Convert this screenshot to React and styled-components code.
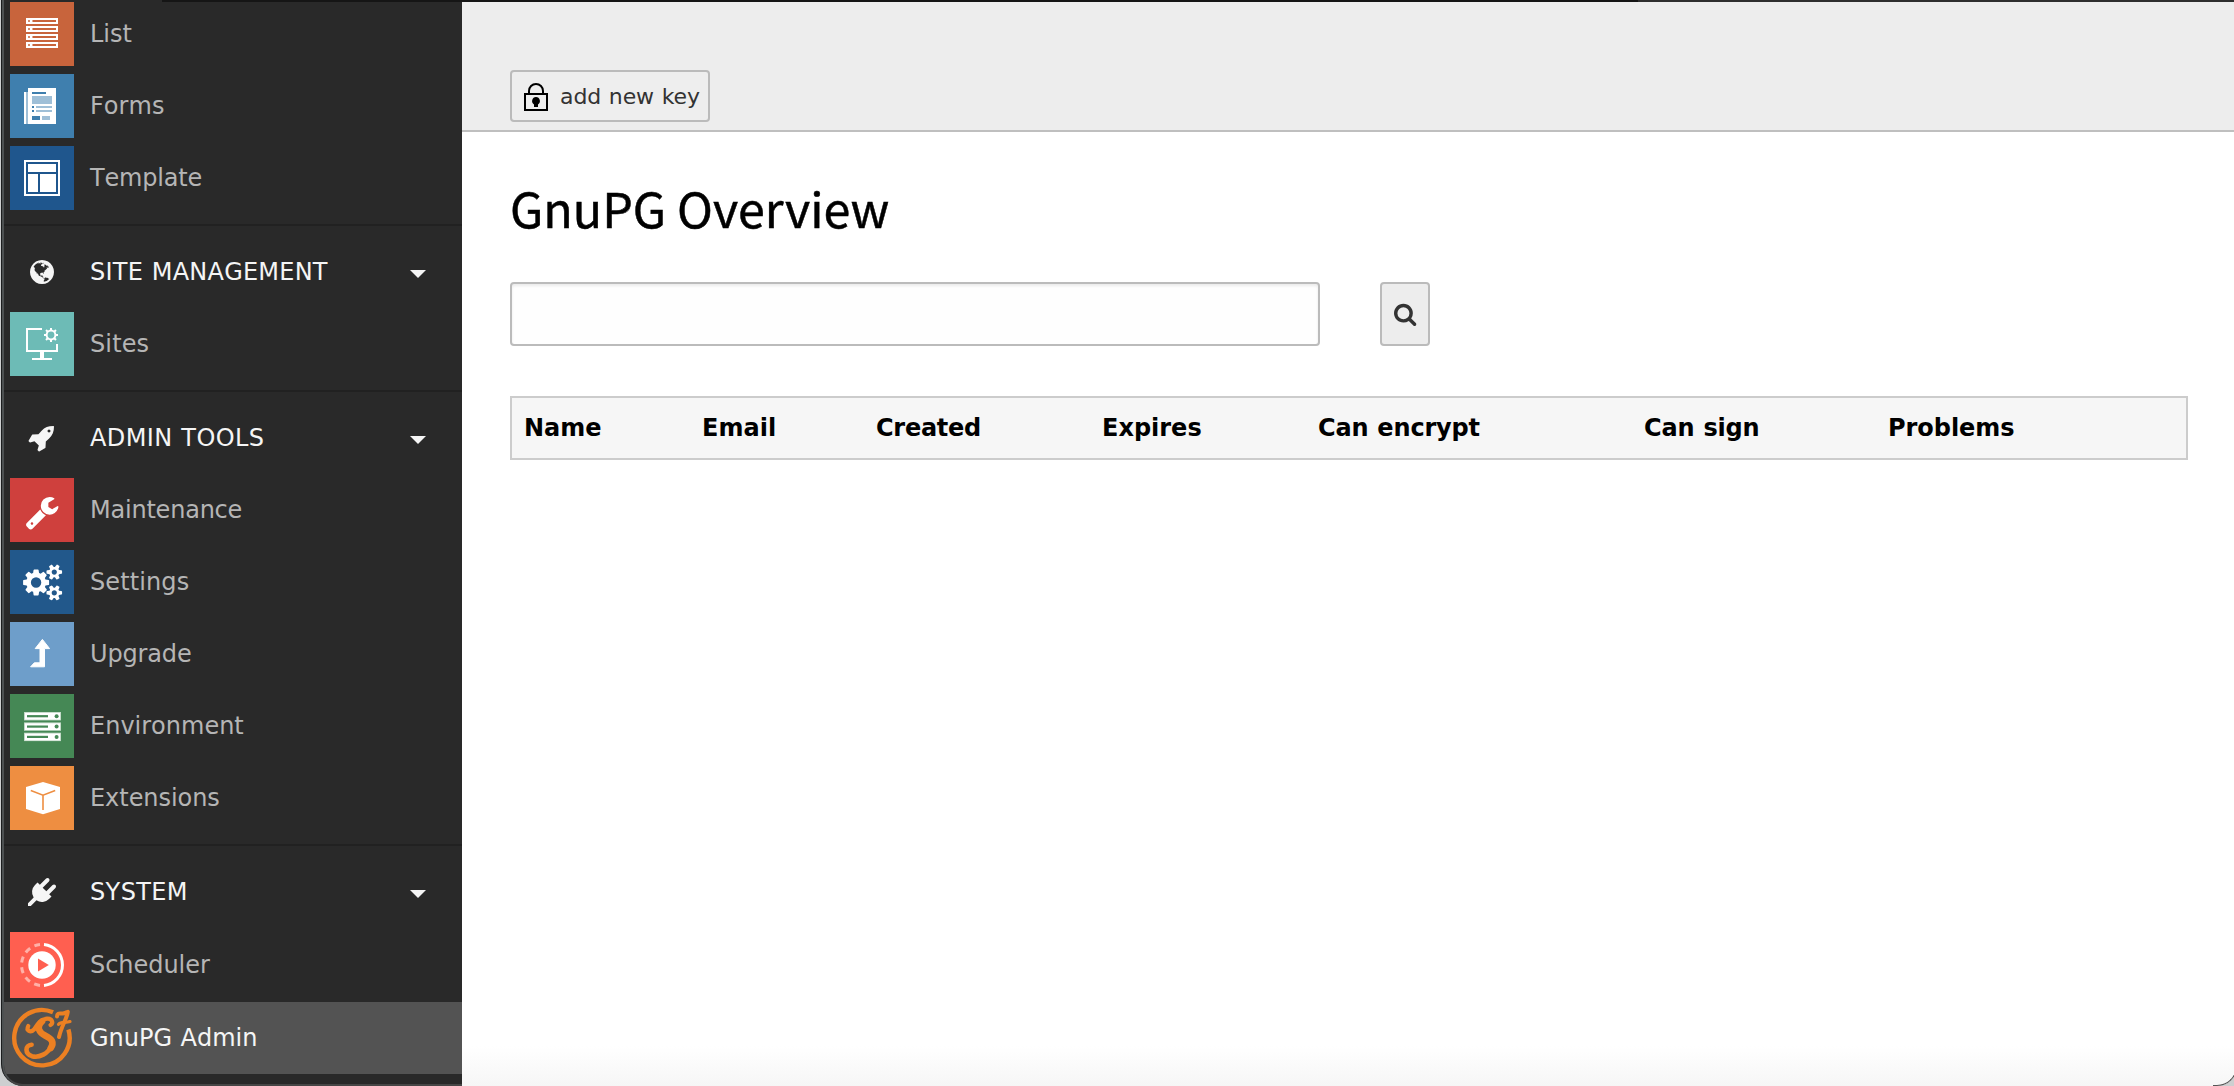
import React from "react";
import styled, { createGlobalStyle, css } from "styled-components";

const GlobalStyle = createGlobalStyle`
  * { box-sizing: border-box; }
  html, body { margin: 0; padding: 0; overflow: hidden; }
  body {
    height: 1086px;
    background: #cdcfd0;
    font-family: "DejaVu Sans", Verdana, sans-serif;
    font-kerning: none;
    word-spacing: 0.8px;
  }
`;

const Window = styled.div`
  position: relative;
  display: flex;
  width: 2236px;
  height: 1086px;
  margin-left: 1px;
  border-left: 1px solid #1c1e1f;
  border-radius: 0 0 20px 22px;
  overflow: hidden;
  background: #292929;
`;

const TopEdge = styled.div`
  position: absolute;
  top: 0;
  left: 160px;
  right: 0;
  height: 2px;
  background: linear-gradient(to right, #151515 1476px, #2e2e2e 1476px);
`;

const CornerLine = styled.div`
  position: absolute;
  right: 0;
  bottom: 0;
  width: 24px;
  height: 24px;
  border: solid #555;
  border-width: 0 1px 1px 0;
  border-radius: 0 0 20px 0;
`;

const Sidebar = styled.nav`
  flex: none;
  display: flex;
  flex-direction: column;
  width: 460px;
  height: 1086px;
  border-left: 2px solid #4d5152;
  border-bottom: 2px solid #464646;
  border-bottom-left-radius: 21px;
  overflow: hidden;
  background: #292929;
`;

const Group = styled.section`
  display: flex;
  flex-direction: column;
  padding-bottom: 10px;
  & + & {
    border-top: 2px solid #212121;
    padding-top: 10px;
  }
  &:first-child { margin-top: -2px; }
`;

const Row = styled.div`
  flex: none;
  display: flex;
  align-items: center;
  gap: 16px;
  height: ${(p) => p.$height || 72}px;
  padding: 0 36px 0 6px;
  margin-left: ${(p) => (p.$active ? "-2px" : "0")};
  padding-left: ${(p) => (p.$active ? "8px" : "6px")};
  color: ${(p) => (p.$bright ? "#f5f5f5" : "#b5b5b5")};
  background: ${(p) => (p.$active ? "#535353" : "transparent")};
`;

const Label = styled.span`
  flex: 1;
  font-size: 24px;
  line-height: 36px;
  letter-spacing: ${(p) => p.$track || 0}px;
  white-space: nowrap;
`;

const Tile = styled.svg`
  flex: none;
  display: block;
  width: 64px;
  height: ${(p) => p.$height || 64}px;
  background: ${(p) => p.$color || "transparent"};
`;

const Caret = styled.span`
  flex: none;
  width: 0;
  height: 0;
  margin-top: 4px;
  border: 8px solid transparent;
  border-top-color: #f5f5f5;
  border-bottom: 0;
`;

const Main = styled.main`
  flex: 1;
  display: flex;
  flex-direction: column;
  background: linear-gradient(#fff 0, #fff 1046px, #f6f6f6 1086px);
`;

const Toolbar = styled.header`
  flex: none;
  height: 132px;
  padding: 70px 48px 0;
  border-bottom: 2px solid #bfbfbf;
  background: #ededed;
`;

const control = css`
  border: 2px solid #bbb;
  border-radius: 4px;
`;

const ToolButton = styled.button`
  ${control}
  display: flex;
  align-items: center;
  gap: 12px;
  width: 200px;
  height: 52px;
  padding: 1px 0 0 12px;
  background: #eee;
  color: #333;
  font: 22px "DejaVu Sans", Verdana, sans-serif;
  letter-spacing: -0.1px;
  word-spacing: 0.8px;
  white-space: nowrap;
`;

const Content = styled.div`
  padding: 0 46px 0 48px;
`;

const Title = styled.h1`
  margin: 37px 0 0;
  height: 113px;
  font-family: "Noto Sans CJK SC", "Open Sans", sans-serif;
  font-size: 48.4px;
  font-weight: 400;
  line-height: 76px;
  font-kerning: normal;
  word-spacing: 0;
  color: #000;
  -webkit-text-stroke: 0.5px #000;
  white-space: nowrap;
`;

const SearchRow = styled.form`
  display: flex;
  gap: 60px;
  margin-bottom: 50px;
`;

const SearchInput = styled.input`
  ${control}
  width: 810px;
  height: 64px;
  padding: 0 16px;
  background: #fefefe;
  box-shadow: inset 0 2px 3px rgba(0, 0, 0, 0.08);
  font: 24px "DejaVu Sans", Verdana, sans-serif;
`;

const SearchButton = styled.button`
  ${control}
  display: flex;
  align-items: center;
  justify-content: center;
  width: 50px;
  height: 64px;
  padding: 0 0 1px 1px;
  background: #ededed;
`;

const TableHead = styled.div`
  display: grid;
  grid-template-columns: 178px 174px 226px 216px 326px 244px 1fr;
  align-items: center;
  width: 1678px;
  height: 64px;
  padding-left: 12px;
  border: 2px solid #ccc;
  background: #f6f6f6;
`;

const HeadCell = styled.div`
  font-size: 24px;
  font-weight: 700;
  line-height: 36px;
  letter-spacing: ${(p) => p.$track || 0}px;
  color: #000;
  white-space: nowrap;
`;

const paths = {
  globe:
    "M896 128q209 0 385.5 103t279.5 279.5 103 385.5-103 385.5-279.5 279.5-385.5 103-385.5-103-279.5-279.5-103-385.5 103-385.5 279.5-279.5 385.5-103zm274 521q-2 1-9.5 9.5t-13.5 9.5q2 0 4.5-5t5-11 3.5-7q6-7 22-15 14-6 52-12 34-8 51 11-2-2 9.5-13t14.5-12q3-2 15-4.5t15-7.5l2-22q-12 1-17.5-7t-6.5-21q0 2-6 8 0-7-4.5-8t-11.5 1-9 1q-10-3-15-7.5t-8-16.5-4-15q-2-5-9.5-11t-9.5-10q-1-2-2.5-5.5t-3-6.5-4-5.5-5.5-2.5-7 5-7.5 10-4.5 5q-3-2-6-1.5t-4.5 1-4.5 3-5 3.5q-3 2-8.5 3t-8.5 2q15-5-1-11-10-4-16-3 9-4 7.5-12t-8.5-14h5q-1-4-8.5-8.5t-17.5-8.5-13-6q-8-5-34-9.5t-33-.5q-5 6-4.5 10.5t4 14 3.5 12.5q1 6-5.5 13t-6.5 12q0 7 14 15.5t10 21.5q-3 8-16 16t-16 12q-5 8-1.5 18.5t10.5 16.5q2 2 1.5 4t-3.5 4.5-5.5 4-6.5 3.5l-3 2q-11 5-20.5-6t-13.5-26q-7-25-16-30-23-8-29 1-5-13-41-26-25-9-58-4 6-1 0-15-7-15-19-12 3-6 4-17.5t1-13.5q3-13 12-23 1-1 7-8.5t9.5-13.5.5-6q35 4 50-11 5-5 11.5-17t10.5-17q9-6 14-5.5t14.5 5.5 14.5 5q14 1 15.5-11t-7.5-20q12 1 3-17-4-7-8-9-12-4-27 5-8 4 2 8-1-1-9.5 10.5t-16.5 17.5-16-5q-1-1-5.5-13.5t-9.5-13.5q-8 0-16 15 3-8-11-15t-24-8q19-12-8-27-7-4-20.5-5t-19.5 4q-5 7-5.5 11.5t5 8 10.5 5.5 11.5 4 8.5 3q14 10 8 14-2 1-8.5 3.5t-11.5 4.5-6 4q-3 4 0 14t-2 14q-5-5-9-17.5t-7-16.5q7 9-25 6l-10-1q-4 0-16 2t-20.5 1-13.5-8q-4-8 0-20 1-4 4-2-4-3-11-9.5t-10-8.5q-46 15-94 41 6 1 12-1 5-2 13-6.5t10-5.5q34-14 42-7l5-5q14 16 20 25-7-4-30-1-20 6-22 12 7 12 5 18-4-3-11.5-10t-14.5-11-15-5q-16 0-22 1-146 80-235 222 7 7 12 8 4 1 5 9t2.5 11 11.5-3q9 8 3 19 1-1 44 27 19 17 21 21 3 11-10 18-1-2-9-9t-9-4q-3 5 .5 18.5t10.5 12.5q-7 0-9.5 16t-2.5 35.5-1 23.5l2 1q-3 12 5.5 34.5t21.5 19.5q-13 3 20 43 6 8 8 9 3 2 12 7.5t15 10 10 10.5q4 5 10 22.5t14 23.5q-2 6 9.5 20t10.5 23q-1 0-2.5 1t-2.5 1q3 7 15.5 14t15.5 13q1 3 2 10t3 11 8 2q2-20-24-62-15-25-17-29-3-5-5.5-15.5t-4.5-14.5q2 0 6 1.5t8.5 3.5 7.5 4 2 3q-3 7 2 17.5t12 18.5 17 19 12 13q6 6 14 19.5t0 13.5q9 0 20 10.5t17 19.5q5 8 8 26t5 24q2 7 8.5 13.5t12.5 9.5l16 8 13 7q5 2 18.5 10.5t21.5 11.5q10 4 16 4t14.5-2.5 13.5-3.5q15-2 29 15t21 21q36 19 55 11-2 1 .5 7.5t8 15.5 9 14.5 5.5 8.5q5 6 18 15t18 15q6-4 7-9-3 8 7 20t18 10q14-3 14-32-31 15-49-18 0-1-2.5-5.5t-4-8.5-2.5-8.5 0-7.5 5-3q9 0 10-3.5t-2-12.5-4-13q-1-8-11-20t-12-15q-5 9-16 8t-16-9q0 1-1.5 5.5t-1.5 6.5q-13 0-15-1 1-3 2.5-17.5t3.5-22.5q1-4 5.5-12t7.5-14.5 4-12.5-4.5-9.5-17.5-2.5q-19 1-26 20-1 3-3 10.5t-5 11.5-9 7q-7 3-24 2t-24-5q-13-8-22.5-29t-9.5-37q0-10 2.5-26.5t3-25-5.5-24.5q3-2 9-9.5t10-10.5q2-1 4.5-1.5t4.5 0 4-1.5 3-6q-1-1-4-3-3-3-4-3 7 3 28.5-1.5t27.5 1.5q15 11 22-2 0-1-2.5-9.5t-.5-13.5q5 27 29 9 3 3 15.5 5t17.5 5q3 2 7 5.5t5.5 4.5 5-.5 8.5-6.5q10 14 12 24 11 40 19 44 7 3 11 2t4.5-9.5 0-14-1.5-12.5l-1-8v-18l-1-8q-15-3-18.5-12t1.5-18.5 15-18.5q1-1 8-3.5t15.5-6.5 12.5-8q21-19 15-35 7 0 11-9-1 0-5-3t-7.5-5-4.5-2q9-5 2-16 5-3 7.5-11t7.5-10q9 12 21 2 7-8 1-16 5-7 20.5-10.5t18.5-9.5q7 2 8-2t1-12 3-12q4-5 15-9t13-5l17-11q3-4 0-4 18 2 31-11 10-11-6-20 3-6-3-9.5t-15-5.5q3-1 11.5-.5t10.5-1.5q15-10-7-16-17-5-43 12zm-163 877q206-36 351-189-3-3-12.5-4.5t-12.5-3.5q-18-7-24-8 1-7-2.5-13t-8-9-12.5-8-11-7q-2-2-7-6t-7-5.5-7.5-4.5-8.5-2-10 1l-3 1q-3 1-5.5 2.5t-5.5 3-4 3 0 2.5q-21-17-36-22-5-1-11-5.5t-10.5-7-10-1.5-11.5 7q-5 5-6 15t-2 13q-7-5 0-17.5t2-18.5q-3-6-10.5-4.5t-12 4.5-11.5 8.5-9 6.5-8.5 5.5-8.5 7.5q-3 4-6 12t-5 11q-2-4-11.5-6.5t-9.5-5.5q2 10 4 35t5 38q7 31-12 48-27 25-29 40-4 22 12 26 0 7-8 20.5t-7 21.5q0 6 2 16z",
  rocket:
    "M1440 448q0-40-28-68t-68-28-68 28-28 68 28 68 68 28 68-28 28-68zm224-288q0 249-75.5 430.5t-253.5 360.5q-81 80-195 176l-20 379q-2 16-16 26l-384 224q-7 4-16 4-12 0-23-9l-64-64q-13-14-8-32l85-276-281-281-276 85q-3 1-9 1-14 0-23-9l-64-64q-17-19-5-39l224-384q10-14 26-16l379-20q96-114 176-195 188-187 358-258t431-71q14 0 24 9.5t10 22.5z",
  plug:
    "M1755 453q37 38 37 90.5t-37 90.5l-401 400 150 150-160 160q-163 163-389.5 186.5t-411.5-100.5l-362 362h-181v-181l362-362q-124-185-100.5-411.5t186.5-389.5l160-160 150 150 400-401q38-37 91-37t90 37 37 90.5-37 90.5l-400 401 234 234 401-400q38-37 91-37t90 37z",
  wrench:
    "M448 1472q0-26-19-45t-45-19-45 19-19 45 19 45 45 19 45-19 19-45zm644-420l-682 682q-37 37-90 37-52 0-91-37l-106-108q-38-36-38-90 0-53 38-91l681-681q39 98 114.5 173.5t173.5 114.5zm634-435q0 39-23 106-47 134-164.5 217.5t-258.5 83.5q-185 0-316.5-131.5t-131.5-316.5 131.5-316.5 316.5-131.5q58 0 121.5 16.5t107.5 46.5q16 11 16 28t-16 28l-293 169v224l193 107q5-3 79-48.5t135.5-81 70.5-35.5q15 0 23.5 10t8.5 25z",
  cogs:
    "M896 896q0-106-75-181t-181-75-181 75-75 181 75 181 181 75 181-75 75-181zm768 512q0-52-38-90t-90-38-90 38-38 90q0 53 37.5 90.5t90.5 37.5 90.5-37.5 37.5-90.5zm0-1024q0-52-38-90t-90-38-90 38-38 90q0 53 37.5 90.5t90.5 37.5 90.5-37.5 37.5-90.5zm-384 421v185q0 10-7 19.5t-16 10.5l-155 24q-11 35-32 76 34 48 90 115 7 11 7 20 0 12-7 19-23 30-82.5 89.5t-78.5 59.5q-11 0-21-7l-115-90q-37 19-77 31-11 108-23 155-7 24-30 24h-186q-11 0-20-7.5t-10-17.5l-23-153q-34-10-75-31l-118 89q-7 7-20 7-11 0-21-8-144-133-144-160 0-9 7-19 10-14 41-53t47-61q-23-44-35-82l-152-24q-10-1-17-9.5t-7-19.5v-185q0-10 7-19.5t16-10.5l155-24q11-35 32-76-34-48-90-115-7-11-7-20 0-12 7-20 22-30 82-89t79-59q11 0 21 7l115 90q34-18 77-32 11-108 23-154 7-24 30-24h186q11 0 20 7.5t10 17.5l23 153q34 10 75 31l118-89q8-7 20-7 11 0 21 8 144 133 144 160 0 8-7 19-12 16-42 54t-45 60q23 48 34 82l152 23q10 2 17 10.5t7 19.5zm640 533v140q0 16-149 31-12 27-30 52 51 113 51 138 0 4-4 7-122 71-124 71-8 0-46-47t-52-68q-20 2-30 2t-30-2q-14 21-52 68t-46 47q-2 0-124-71-4-3-4-7 0-25 51-138-18-25-30-52-149-15-149-31v-140q0-16 149-31 13-29 30-52-51-113-51-138 0-4 4-7 4-2 35-20t59-34 30-16q8 0 46 46.5t52 67.5q20-2 30-2t30 2q51-71 92-112l6-2q4 0 124 70 4 3 4 7 0 25-51 138 17 23 30 52 149 15 149 31zm0-1024v140q0 16-149 31-12 27-30 52 51 113 51 138 0 4-4 7-122 71-124 71-8 0-46-47t-52-68q-20 2-30 2t-30-2q-14 21-52 68t-46 47q-2 0-124-71-4-3-4-7 0-25 51-138-18-25-30-52-149-15-149-31v-140q0-16 149-31 13-29 30-52-51-113-51-138 0-4 4-7 4-2 35-20t59-34 30-16q8 0 46 46.5t52 67.5q20-2 30-2t30 2q51-71 92-112l6-2q4 0 124 70 4 3 4 7 0 25-51 138 17 23 30 52 149 15 149 31z",
  search:
    "M1152 832q0-185-131.5-316.5t-316.5-131.5-316.5 131.5-131.5 316.5 131.5 316.5 316.5 131.5 316.5-131.5 131.5-316.5zm512 832q0 52-38 90t-90 38q-54 0-90-38l-343-342q-179 124-399 124-143 0-273.5-55.5t-225-150-150-225-55.5-273.5 55.5-273.5 150-225 225-150 273.5-55.5 273.5 55.5 225 150 150 225 55.5 273.5q0 220-124 399l343 343q37 37 37 90z",
};

const HeaderIcon = ({ path, x = 18, y = 18 }) => (
  <Tile viewBox="0 0 64 64" fill="#f5f5f5">
    <path d={path} transform={`translate(${x} ${y}) scale(0.015625)`} />
  </Tile>
);

const ListIcon = () => (
  <Tile viewBox="0 0 64 64" $color="#c8643c" shapeRendering="crispEdges">
    {[16, 24, 32, 40].map((y) => (
      <g key={y}>
        <rect x="16" y={y} width="32" height="6" fill="#fff" />
        <rect x="18" y={y + 2} width="2" height="2" fill="#d78b6c" />
        <rect x="22" y={y + 2} width="1" height="2" fill="#e2ab95" />
        <rect x="23" y={y + 2} width="23" height="2" fill="#c8643c" />
      </g>
    ))}
  </Tile>
);

const FormsIcon = () => (
  <Tile viewBox="0 0 64 64" $color="#3f7fae" shapeRendering="crispEdges">
    <path fill="#fff" d="M14 18h2v32h-2zM18 14h28v36H18z" />
    <path fill="#9fbfd7" d="M16 18h2v32h-2zM22 22h20v8H22zM26 32h16v2H26zM26 36h16v2H26zM32 42h8v4h-8z" />
    <path fill="#3f7fae" d="M22 18h14v2H22zM22 32h2v2h-2zM22 36h2v2h-2zM22 42h8v4h-8z" />
  </Tile>
);

const TemplateIcon = () => (
  <Tile viewBox="0 0 64 64" $color="#1f568d" shapeRendering="crispEdges">
    <path fill="#fff" fillRule="evenodd" d="M14 14h36v36H14zM16 16v32h32V16z" />
    <path fill="#fff" d="M18 18h28v8H18zM18 28h10v18H18zM30 28h16v18H30z" />
  </Tile>
);

const SitesIcon = () => (
  <Tile viewBox="0 0 64 64" $color="#6dbbb6">
    <path fill="#fff" d="M16 16h16v2H18v20h28v-6h2v8H34v6h8v2H22v-2h8v-6H16z" />
    <circle cx="41" cy="23" r="4.4" fill="none" stroke="#fff" strokeWidth="2" />
    {[0, 45, 90, 135, 180, 225, 270, 315].map((a) => (
      <rect key={a} x="40" y="16" width="2" height="3" fill="#fff" transform={`rotate(${a} 41 23)`} />
    ))}
  </Tile>
);

const MaintenanceIcon = () => (
  <Tile viewBox="0 0 64 64" $color="#cf403d">
    <path fill="#fff" d={paths.wrench} transform="translate(14.4 16.5) scale(0.0197)" />
  </Tile>
);

const SettingsIcon = () => (
  <Tile viewBox="0 0 64 64" $color="#22588b">
    <path fill="#fff" d={paths.cogs} transform="translate(13.1 14.3) scale(0.0203)" />
  </Tile>
);

const UpgradeIcon = () => (
  <Tile viewBox="0 0 64 64" $color="#6e9eca">
    <path
      fill="#fff"
      stroke="#fff"
      strokeWidth="1"
      strokeLinejoin="round"
      d="M32.4 17.4L39.6 26.6H34.5V44.8H20.6L24.3 40.8H30V26.6H25.2Z"
    />
  </Tile>
);

const EnvironmentIcon = () => (
  <Tile viewBox="0 0 64 64" $color="#458855">
    {[18, 28.4, 38.7].map((y) => (
      <g key={y}>
        <rect x="14" y={y} width="37" height="8.4" fill="#c4dac9" />
        <rect x="15" y={y + 0.9} width="35" height="6.7" fill="#fff" />
        <rect x="17" y={y + 3.1} width="21" height="2.2" fill="#458855" />
        <circle cx="46.6" cy={y + 4.2} r="2" fill="#458855" />
      </g>
    ))}
  </Tile>
);

const ExtensionsIcon = () => (
  <Tile viewBox="0 0 64 64" $color="#ee8e41">
    <path fill="#fff" d="M33 16L50 21V43L33 48.3L16 43V21Z" />
    <path fill="none" stroke="#ee8e41" strokeWidth="1.6" d="M20.8 24.6L33 29.2L45.2 24.6M33 29V44" />
  </Tile>
);

const SchedulerIcon = () => (
  <Tile viewBox="0 0 64 66" $height={66} $color="#ff5f50">
    <path fill="none" stroke="#fff" strokeWidth="3" d="M34 12.6A20.5 20.5 0 0 1 34 53.4" />
    <path
      fill="none"
      stroke="#ffb1a8"
      strokeWidth="3"
      strokeDasharray="6 4.85"
      d="M30 53.4A20.5 20.5 0 0 1 30 12.6"
    />
    <circle cx="32" cy="33" r="13.7" fill="#fff" />
    <path fill="#ff5f50" d="M28 26.6L38.8 33L28 39.4Z" />
  </Tile>
);

const GnuPGIcon = () => (
  <Tile viewBox="0 0 64 64" fill="none" stroke="#ec8022" strokeLinecap="round" strokeLinejoin="round">
    <path strokeWidth="4.4" strokeLinecap="butt" d="M43 6.3A27.7 27.7 0 1 0 58.4 23.5" />
    <path strokeWidth="4.2" d="M18.3 20C15.8 24.6 20.4 27.4 24.3 23.2C28 17.2 31 13.2 37 12.7C42.4 12.4 43.6 17.2 40.5 19" />
    <path strokeWidth="6.6" d="M32 15.5C25.8 21.5 29.5 26.8 35 29.4C42.6 33 44.2 37 40.8 42" />
    <path strokeWidth="4.6" d="M41.6 39.5C38.5 47.6 29 52.2 22 50.2C14.6 47.6 14.8 39.4 21.6 38.8" />
    <path strokeWidth="4" d="M47 10.6C47 6 50.5 7.8 53 7.4C55 7.2 56.4 6.4 57.8 5.8C57.2 12 51.5 20 49 31" />
    <path strokeWidth="3.2" d="M48.5 18.4C51 14.8 55.5 17.3 60 15.6" />
  </Tile>
);

const LockIcon = () => (
  <svg width="24" height="28" viewBox="0 0 24 28" fill="none" stroke="#000" strokeWidth="2">
    <path d="M5 11V8a7 7 0 0 1 14 0v3" />
    <path d="M1 11h22v16H1z" />
    <path fill="#000" stroke="none" d="M12 14a4 4 0 0 1 2 7.4V24h-4v-2.6A4 4 0 0 1 12 14z" />
  </svg>
);

const groups = [
  {
    items: [
      { label: "List", icon: ListIcon },
      { label: "Forms", icon: FormsIcon, track: 0.05 },
      { label: "Template", icon: TemplateIcon, track: -0.18 },
    ],
  },
  {
    title: "SITE MANAGEMENT",
    track: 0.23,
    path: paths.globe,
    items: [{ label: "Sites", icon: SitesIcon, track: 0.13 }],
  },
  {
    title: "ADMIN TOOLS",
    track: 0.38,
    path: paths.rocket,
    items: [
      { label: "Maintenance", icon: MaintenanceIcon, track: -0.22 },
      { label: "Settings", icon: SettingsIcon, track: 0.1 },
      { label: "Upgrade", icon: UpgradeIcon, track: -0.15 },
      { label: "Environment", icon: EnvironmentIcon, track: 0 },
      { label: "Extensions", icon: ExtensionsIcon, track: -0.05 },
    ],
  },
  {
    title: "SYSTEM",
    track: 0.38,
    path: paths.plug,
    items: [
      { label: "Scheduler", icon: SchedulerIcon, track: -0.05, height: 74 },
      { label: "GnuPG Admin", icon: GnuPGIcon, track: 0, active: true },
    ],
  },
];

const columns = [
  ["Name", 0],
  ["Email", 0.03],
  ["Created", -0.28],
  ["Expires", 0],
  ["Can encrypt", -0.17],
  ["Can sign", -0.16],
  ["Problems", -0.04],
];

export default function App() {
  return (
    <>
      <GlobalStyle />
      <Window>
        <Sidebar>
          {groups.map((group, i) => (
            <Group key={i}>
              {group.title && (
                <Row $bright>
                  <HeaderIcon path={group.path} />
                  <Label $track={group.track}>{group.title}</Label>
                  <Caret />
                </Row>
              )}
              {group.items.map(({ label, icon: Icon, track, height, active }) => (
                <Row key={label} $height={height} $active={active} $bright={active}>
                  <Icon />
                  <Label $track={track}>{label}</Label>
                </Row>
              ))}
            </Group>
          ))}
        </Sidebar>
        <Main>
          <Toolbar>
            <ToolButton type="button">
              <LockIcon />
              add new key
            </ToolButton>
          </Toolbar>
          <Content>
            <Title>GnuPG Overview</Title>
            <SearchRow>
              <SearchInput type="text" />
              <SearchButton type="button" aria-label="Search">
                <svg width="24" height="24" viewBox="0 0 1792 1792" fill="#333">
                  <path d={paths.search} />
                </svg>
              </SearchButton>
            </SearchRow>
            <TableHead>
              {columns.map(([name, track]) => (
                <HeadCell key={name} $track={track}>
                  {name}
                </HeadCell>
              ))}
            </TableHead>
          </Content>
        </Main>
        <TopEdge />
        <CornerLine />
      </Window>
    </>
  );
}
